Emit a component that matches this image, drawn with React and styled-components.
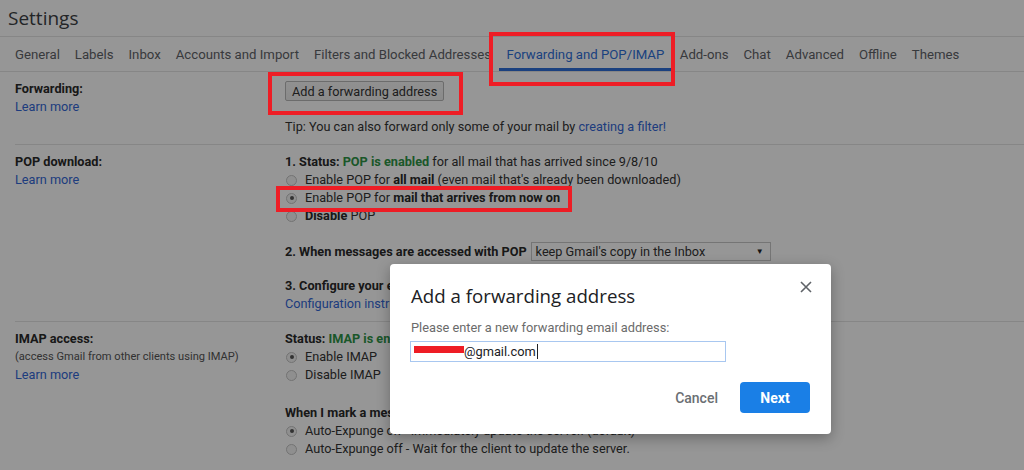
import styled, { createGlobalStyle } from "styled-components";

const GlobalStyle = createGlobalStyle`
	html, body {
		margin: 0;
		padding: 0;
		background: #fff;
	}
	body {
		font-family: Roboto, "Liberation Sans", Arial, sans-serif;
		color: #2a2a2a;
	}
`;

const Page = styled.div`
	position: relative;
	width: 1024px;
	height: 470px;
	overflow: hidden;
	background: #fff;
`;

const Title = styled.h1`
	margin: 0;
	height: 36px;
	padding-left: 8px;
	font-family: "Open Sans", Roboto, sans-serif;
	font-weight: 400;
	font-size: 19px;
	line-height: 36px;
	color: #3c4043;
	border-bottom: 1px solid #e4e4e4;
`;

const Tabs = styled.nav`
	display: flex;
	height: 34px;
	padding-left: 7.5px;
	border-bottom: 1px solid #e4e4e4;
`;

const Tab = styled.div`
	display: flex;
	align-items: center;
	padding: 3px ${(p) => (p.$active ? 8 : 7.5)}px 0;
	font-size: 13.2px;
	color: ${(p) => (p.$active ? "#2f6fd8" : "#5f6368")};
	border-bottom: 3px solid ${(p) => (p.$active ? "#2f6fd8" : "transparent")};
	white-space: nowrap;
`;

const Section = styled.section`
	display: grid;
	grid-template-columns: 270px 1fr;
	margin-left: 15px;
	padding: 8px 0;
	border-bottom: 1px solid #e4e4e4;
	font-size: 12.7px;
	line-height: 18px;
	&:last-of-type {
		border-bottom: none;
	}
`;

const Side = styled.div`
	display: flex;
	flex-direction: column;
`;

const Heading = styled.div`
	font-weight: 700;
	color: #2a2a2a;
`;

const Note = styled.div`
	font-size: 11.1px;
	color: #555;
`;

const Link = styled.a`
	color: #3367d6;
	text-decoration: none;
`;

const Body = styled.div`
	display: flex;
	flex-direction: column;
	white-space: nowrap;
	color: #333;
`;

const Block = styled.div`
	display: flex;
	flex-direction: column;
	margin-top: ${(p) => p.$gap || 0}px;
`;

const Strong = styled.b`
	font-weight: 700;
	color: #2a2a2a;
`;

const Green = styled.b`
	font-weight: 700;
	color: #2e9447;
`;

const GreyButton = styled.button`
	align-self: flex-start;
	margin-top: 1px;
	height: 20px;
	padding: 0 6px;
	font-family: Roboto, "Liberation Sans", Arial, sans-serif;
	font-size: 12.7px;
	color: #333;
	background: linear-gradient(#f6f6f6, #ececec);
	border: 1px solid #b8b8b8;
	border-radius: 2px;
`;

const Tip = styled.div`
	margin-top: 17px;
`;

const RadioRow = styled.label`
	display: flex;
	align-items: center;
	gap: 8px;
	height: 18px;
`;

const Radio = styled.span`
	position: relative;
	width: 9px;
	height: 9px;
	margin-left: 1px;
	border: 1px solid #c4c4c4;
	border-radius: 50%;
	background: #f3f3f3;
	&::after {
		content: "";
		display: ${(p) => (p.$checked ? "block" : "none")};
		position: absolute;
		left: 2.5px;
		top: 2.5px;
		width: 4px;
		height: 4px;
		border-radius: 50%;
		background: #555;
	}
`;

const SelectRow = styled.div`
	display: flex;
	align-items: center;
	gap: 4px;
	height: 19px;
`;

const Select = styled.div`
	display: flex;
	align-items: center;
	justify-content: space-between;
	box-sizing: border-box;
	width: 240px;
	height: 19px;
	padding: 0 6px 0 4px;
	border: 1px solid #c8c8c8;
	background: #fff;
	font-size: 12.7px;
	color: #333;
`;

const Arrow = styled.span`
	font-size: 8px;
	color: #222;
`;

const Dim = styled.div`
	position: absolute;
	inset: 0;
	background: rgba(0, 0, 0, 0.41);
`;

const Mark = styled.div`
	position: absolute;
	left: ${(p) => p.$x}px;
	top: ${(p) => p.$y}px;
	width: ${(p) => p.$w}px;
	height: ${(p) => p.$h}px;
	box-sizing: border-box;
	border: 4px solid #ee1d25;
`;

const Dialog = styled.div`
	position: absolute;
	left: 390px;
	top: 264px;
	width: 441px;
	height: 170px;
	box-sizing: border-box;
	padding: 18px 18px 21px 21px;
	display: flex;
	flex-direction: column;
	background: #fff;
	border-radius: 4px;
	box-shadow: 0 4px 14px rgba(0, 0, 0, 0.3);
`;

const DialogHead = styled.div`
	display: flex;
	justify-content: space-between;
	align-items: flex-start;
`;

const DialogTitle = styled.h2`
	margin: 0;
	font-family: "Open Sans", Roboto, sans-serif;
	font-size: 18.7px;
	font-weight: 400;
	line-height: 28px;
	color: #202124;
`;

const Close = styled.button`
	margin-top: -2px;
	padding: 0;
	width: 14px;
	height: 14px;
	border: none;
	background: none;
	color: #5f6368;
	display: flex;
`;

const Prompt = styled.div`
	margin-top: 9px;
	font-size: 12.8px;
	line-height: 18px;
	color: #6b6b6b;
`;

const Field = styled.div`
	display: flex;
	align-items: center;
	box-sizing: border-box;
	width: 316px;
	height: 21px;
	margin: 4px 0 0 -1px;
	padding-left: 3px;
	border: 1px solid #a8c7f0;
	font-size: 12.8px;
	color: #202124;
`;

const Redact = styled.span`
	display: inline-block;
	width: 50px;
	height: 7px;
	margin-top: -4px;
	background: #ee1d25;
`;

const Caret = styled.span`
	display: inline-block;
	width: 1px;
	height: 15px;
	margin-left: 1px;
	background: #202124;
`;

const Actions = styled.div`
	display: flex;
	justify-content: flex-end;
	align-items: center;
	gap: 11px;
	margin-top: auto;
	padding-right: 3px;
`;

const TextButton = styled.button`
	padding: 0 11px;
	height: 31px;
	border: none;
	background: none;
	font-family: Roboto, "Liberation Sans", Arial, sans-serif;
	font-size: 14px;
	font-weight: 500;
	color: #6b6f73;
`;

const PrimaryButton = styled.button`
	width: 70px;
	height: 31px;
	border: none;
	border-radius: 4px;
	background: #1a7fe6;
	font-family: Roboto, "Liberation Sans", Arial, sans-serif;
	font-size: 14px;
	font-weight: 700;
	color: #fff;
`;

const tabs = [
	"General",
	"Labels",
	"Inbox",
	"Accounts and Import",
	"Filters and Blocked Addresses",
	"Forwarding and POP/IMAP",
	"Add-ons",
	"Chat",
	"Advanced",
	"Offline",
	"Themes",
];

function Choice({ checked, children }) {
	return (
		<RadioRow>
			<Radio $checked={checked} />
			<span>{children}</span>
		</RadioRow>
	);
}

export default function App() {
	return (
		<Page>
			<GlobalStyle />
			<Title>Settings</Title>
			<Tabs>
				{tabs.map((t) => (
					<Tab key={t} $active={t === "Forwarding and POP/IMAP"}>
						{t}
					</Tab>
				))}
			</Tabs>

			<Section>
				<Side>
					<Heading>Forwarding:</Heading>
					<Link>Learn more</Link>
				</Side>
				<Body>
					<GreyButton>Add a forwarding address</GreyButton>
					<Tip>
						Tip: You can also forward only some of your mail by <Link>creating a filter!</Link>
					</Tip>
				</Body>
			</Section>

			<Section>
				<Side>
					<Heading>POP download:</Heading>
					<Link>Learn more</Link>
				</Side>
				<Body>
					<div>
						<Strong>1. Status: </Strong>
						<Green>POP is enabled</Green> for all mail that has arrived since 9/8/10
					</div>
					<Choice>
						Enable POP for <Strong>all mail</Strong> (even mail that's already been downloaded)
					</Choice>
					<Choice checked>
						Enable POP for <Strong>mail that arrives from now on</Strong>
					</Choice>
					<Choice>
						<Strong>Disable</Strong> POP
					</Choice>
					<Block $gap={17}>
						<SelectRow>
							<Strong>2. When messages are accessed with POP</Strong>
							<Select>
								keep Gmail's copy in the Inbox
								<Arrow>▼</Arrow>
							</Select>
						</SelectRow>
					</Block>
					<Block $gap={16}>
						<Strong>3. Configure your email client</Strong>
						<Link>Configuration instructions</Link>
					</Block>
				</Body>
			</Section>

			<Section>
				<Side>
					<Heading>IMAP access:</Heading>
					<Note>(access Gmail from other clients using IMAP)</Note>
					<Link>Learn more</Link>
				</Side>
				<Body>
					<div>
						<Strong>Status: </Strong>
						<Green>IMAP is enabled</Green>
					</div>
					<Choice checked>Enable IMAP</Choice>
					<Choice>Disable IMAP</Choice>
					<Block $gap={20}>
						<Strong>When I mark a message in IMAP as deleted:</Strong>
						<Choice checked>Auto-Expunge on - Immediately update the server. (default)</Choice>
						<Choice>Auto-Expunge off - Wait for the client to update the server.</Choice>
					</Block>
				</Body>
			</Section>

			<Dim />
			<Mark $x={489} $y={32} $w={186} $h={54} />
			<Mark $x={268} $y={72} $w={195} $h={43} />
			<Mark $x={276} $y={186} $w={296} $h={26} />

			<Dialog>
				<DialogHead>
					<DialogTitle>Add a forwarding address</DialogTitle>
					<Close aria-label="Close">
						<svg width="14" height="14" viewBox="0 0 14 14">
							<path d="M2 2 L12 12 M12 2 L2 12" stroke="currentColor" strokeWidth="1.6" />
						</svg>
					</Close>
				</DialogHead>
				<Prompt>Please enter a new forwarding email address:</Prompt>
				<Field>
					<Redact />
					@gmail.com
					<Caret />
				</Field>
				<Actions>
					<TextButton>Cancel</TextButton>
					<PrimaryButton>Next</PrimaryButton>
				</Actions>
			</Dialog>
		</Page>
	);
}
